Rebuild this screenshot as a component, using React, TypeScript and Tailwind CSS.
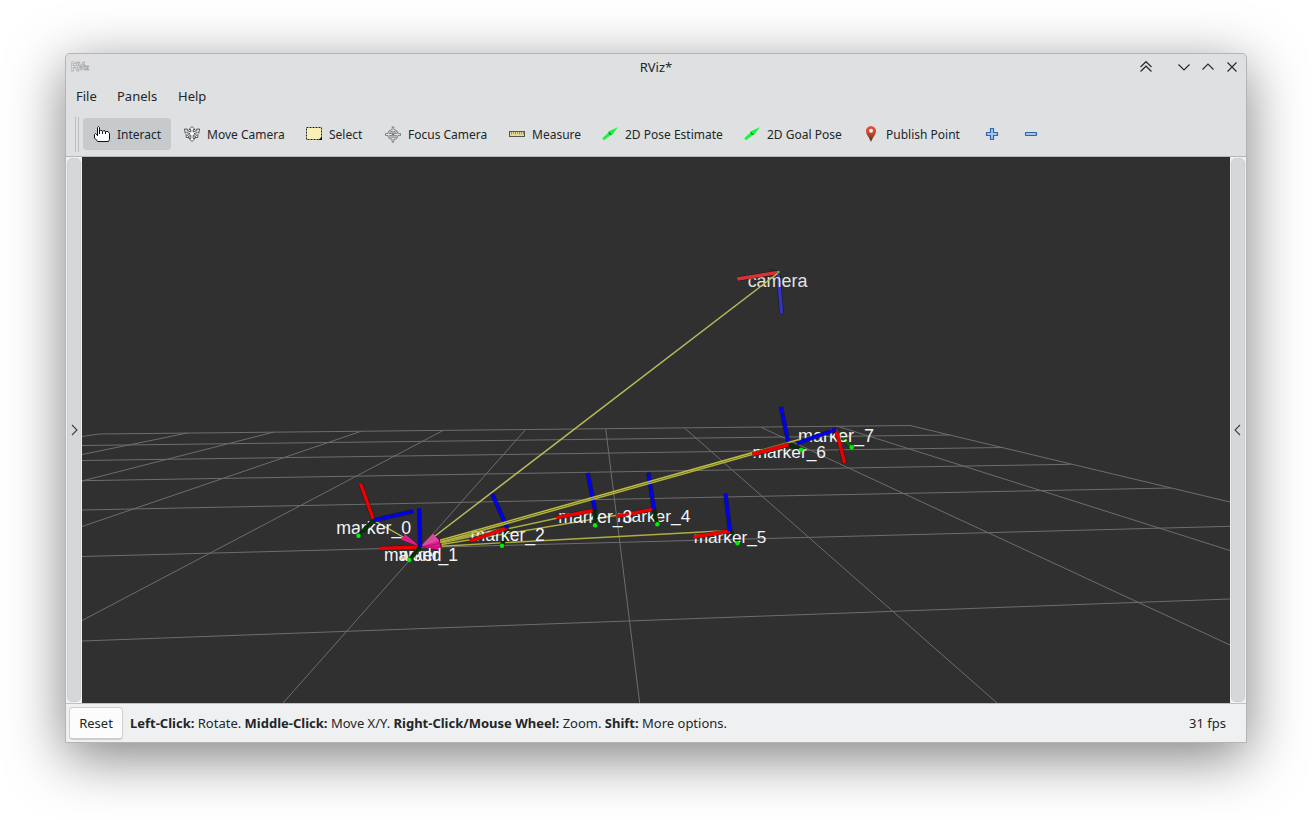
import type { ReactNode } from "react";

type Pt = [number, number];

const GRID: [number, number, number, number][] = [
  [99, 434, 910, 425.5],
  [82, 445.5, 950, 435],
  [82, 460.5, 1003, 447.5],
  [82, 480.7, 1071, 464.3],
  [82, 510, 1171, 488],
  [82, 556.5, 1230, 526.3],
  [82, 641, 1230, 599],
  [99, 434, 82, 436.5],
  [187.5, 433, 82, 454.5],
  [274, 432, 82, 481],
  [361, 431.3, 82, 526.5],
  [443, 430.5, 82, 620.5],
  [525.5, 429.7, 283, 703],
  [605.7, 428.5, 639.7, 703],
  [684.5, 428, 997, 703],
  [761, 427.3, 1230, 645],
  [837, 426, 1230, 550.5],
  [910, 425.5, 1230, 502],
];

interface Frame {
  name: string;
  o: Pt;
  x: Pt;
  y: Pt;
  z: Pt;
  label: Pt;
  size: number;
  labelOverGreen?: boolean;
}

const FRAMES: Frame[] = [
  { name: "marker_7", o: [836, 429.5], x: [844.7, 463], y: [851.7, 447.3], z: [797, 443.3], label: [836, 442], size: 18, labelOverGreen: true },
  { name: "marker_6", o: [788.7, 444.5], x: [752.5, 454.5], y: [801, 449.7], z: [781, 407], label: [789.3, 457.5], size: 17.4, labelOverGreen: true },
  { name: "marker_5", o: [730, 531], x: [693, 537], y: [737.5, 543.3], z: [725.5, 493.7], label: [730, 543.3], size: 17.2, labelOverGreen: true },
  { name: "marker_4", o: [654, 509], x: [616.5, 516.3], y: [657.3, 524.3], z: [648.3, 472.7], label: [653.7, 521.8], size: 17.4 },
  { name: "marker_3", o: [595, 510], x: [556.5, 517.7], y: [595, 525.3], z: [587.7, 473], label: [595.3, 523], size: 17.5 },
  { name: "marker_2", o: [507.3, 528], x: [470, 541], y: [502, 545.7], z: [492, 493.5], label: [507.7, 541], size: 17.6, labelOverGreen: true },
  { name: "marker_1", o: [420.3, 547], x: [379.3, 548.5], y: [409.3, 560], z: [419.2, 508.5], label: [421, 561], size: 17.5 },
  { name: "marker_0", o: [373.7, 520.3], x: [360.5, 483.5], y: [358.5, 535.7], z: [413.3, 511.3], label: [373.7, 533.5], size: 17.8 },
];

const LINKS: Pt[] = [
  [507.3, 527.5],
  [595, 510],
  [654, 509],
  [730, 530.5],
];

function Axis({ from, to, color }: { from: Pt; to: Pt; color: string }) {
  return (
    <g>
      <line x1={from[0]} y1={from[1]} x2={to[0]} y2={to[1]} stroke="#120c18" strokeOpacity="0.6" strokeWidth="4.600" />
      <line x1={from[0]} y1={from[1]} x2={to[0]} y2={to[1]} stroke={color} strokeWidth="3.400" />
    </g>
  );
}

function FrameMark({ f }: { f: Frame }) {
  const green = <Axis from={f.o} to={f.y} color={f.name === "marker_7" ? "#006c00" : "#003200"} />;
  return (
    <g>
      {f.labelOverGreen && green}
      <text x={f.label[0]} y={f.label[1]} fontSize={f.size}>
        {f.name}
      </text>
      {f.name === "marker_1" && (
        <text x="420.500" y="561" fontSize="17.500">
          world
        </text>
      )}
      <Axis from={f.o} to={f.x} color="#ee0000" />
      <Axis from={f.o} to={f.z} color="#0000ee" />
      {!f.labelOverGreen && green}
      <circle cx={f.y[0]} cy={f.y[1]} r="2.200" fill="#00f000" />
    </g>
  );
}

function Scene() {
  return (
    <svg width="1148" height="546" viewBox="82 157 1148 546" className="block">
      <g stroke="#6d6d6d" strokeWidth="1">
        {GRID.map((l, i) => (
          <line key={i} x1={l[0]} y1={l[1]} x2={l[2]} y2={l[3]} />
        ))}
      </g>
      <g stroke="#aeae3c" strokeWidth="1.400">
        {LINKS.map((p, i) => (
          <line key={i} x1={p[0]} y1={p[1]} x2="440" y2={542 + i * 1.4} />
        ))}
        <line x1="373.700" y1="520.300" x2="404" y2="537.500" stroke="#b9b960" />
      </g>
      <polygon points="441,538 442,550 420,547" fill="#7c0b4c" />
      <polygon points="438,537 441,549.5 420,547.3" fill="#ea1591" />
      <path d="M421 547L440 543.500M421 547L441 547" stroke="#a31068" strokeWidth="0.8" />
      <polygon points="433,533.5 439.5,540.5 420,547" fill="#d84b9c" />
      <path d="M434 533L440 541" stroke="#3a0a28" strokeWidth="1" />
      <polygon points="405,534 401,539.5 420,546.8" fill="#e8198f" />
      <g fontFamily="'Liberation Sans', Arial, sans-serif" fill="#f4f4f4" textAnchor="middle">
        {FRAMES.map((f) => (
          <FrameMark key={f.name} f={f} />
        ))}
        <Axis from={[778, 273]} to={[781.7, 313.5]} color="#3333c0" />
        <text x="777.500" y="286.500" fontSize="17.900" fill="#e2e2e2">
          camera
        </text>
      </g>
      <g stroke="#bcbc3c" strokeWidth="1.500">
        <line x1="800" y1="439.300" x2="440" y2="540.300" />
        <line x1="788" y1="444.500" x2="440" y2="542.300" stroke="#b2b23c" />
      </g>
      <Axis from={[788.7, 444.5]} to={[752.5, 454.5]} color="#ee0000" />
      <Axis from={[778, 273]} to={[769, 271.5]} color="#243a24" />
      <Axis from={[778, 272.5]} to={[737.3, 279]} color="#d93232" />
      <circle cx="778.500" cy="272" r="1.200" fill="#40c840" />
      <line x1="777.500" y1="273.500" x2="435" y2="536" stroke="#b9b95c" strokeWidth="1.500" />
    </svg>
  );
}

function HandIcon() {
  return (
    <svg width="16" height="16" viewBox="0 0 16 16" fill="#fff" stroke="#111" strokeWidth="1">
      <path d="M3.500 10V1.500L4.500 .5L5.500 1.500V5.500L6.500 4.500H8L8.500 5.500L9.500 4.800H11L11.500 6L12.500 5.500H14L15.500 7.500V13.500L14.500 15.500H3.500L2.500 14L.5 12V8.500L1.500 7.500L3.500 9.500" />
      <path d="M5.500 5V8M8.500 5.500V8M11.500 6V8" fill="none" />
    </svg>
  );
}

function MoveIcon() {
  return (
    <svg width="16" height="16" viewBox="0 0 16 16" fill="#f8f8f8" stroke="#4a4a4a" strokeWidth="0.9" strokeLinejoin="round">
      <path d="M8 .5L11 3.500H9.200V6L13 4.500L12.500 3.200L15.600 3L14.800 7.200L13.700 6.200L10 7.800L12.800 9.500L13.800 8.500V11.500H10.800L11.800 10.700L9.200 9.200V12.500H11L8 15.500L5 12.500H6.800V9.200L4.200 10.700L5.200 11.500H2.200V8.500L3.200 9.500L6 7.800L2.300 6.200L1.200 7.200L.4 3L3.500 3.200L3 4.500L6.800 6V3.500H5Z" />
    </svg>
  );
}

function SelectIcon() {
  return (
    <svg width="16" height="16" viewBox="0 0 16 16">
      <rect x=".5" y="1.500" width="15" height="12" fill="#f9f0b5" stroke="#222" strokeDasharray="2 1" />
      <path d="M16 10.500V14H12.500Z" fill="#000" />
    </svg>
  );
}

function FocusIcon() {
  return (
    <svg width="17" height="17" viewBox="0 0 17 17" fill="none">
      <circle cx="8.500" cy="8.500" r="4.600" stroke="#777" strokeWidth="2.600" />
      <path d="M8.500 0V17M0 8.500H17" stroke="#777" strokeWidth="2.600" />
      <path d="M8.500 1V16M1 8.500H16" stroke="#e8e8e8" strokeWidth="1" />
      <circle cx="8.500" cy="8.500" r="4.600" stroke="#e8e8e8" strokeWidth="1" />
      <circle cx="8.500" cy="8.500" r="1.200" fill="#777" />
    </svg>
  );
}

function MeasureIcon() {
  return (
    <svg width="16" height="16" viewBox="0 0 16 16">
      <rect x=".5" y="5.500" width="15" height="5" fill="#e8d99b" stroke="#555" />
      <path d="M2.500 6V8.500M4.500 6V8M6.500 6V8.500M8.500 6V8M10.500 6V8.500M12.500 6V8M14.500 6V8.500" stroke="#8a7f58" strokeWidth=".8" />
    </svg>
  );
}

function ArrowIcon() {
  return (
    <svg width="16" height="16" viewBox="0 0 16 16">
      <path d="M.3 12.200L6.800 6.300L6.300 5.600L15.800 1.200L9.800 9.300L9.300 8.700L1.800 14.200Z" fill="#0ff83a" />
      <path d="M6.800 6.300L9.300 8.700L7.800 8.200Z" fill="#074c12" stroke="#074c12" strokeWidth=".4" />
    </svg>
  );
}

function PinIcon() {
  return (
    <svg width="16" height="16" viewBox="0 0 16 16">
      <defs>
        <linearGradient id="pin" x1="0" y1="0" x2="0" y2="1">
          <stop offset="0" stopColor="#e8503c" />
          <stop offset=".4" stopColor="#cf4a30" />
          <stop offset="1" stopColor="#43301a" />
        </linearGradient>
      </defs>
      <path d="M8 0A5 5 0 0 1 13 5.200C13 8.800 9.500 11.500 8 16C6.500 11.500 3 8.800 3 5.200A5 5 0 0 1 8 0Z" fill="url(#pin)" />
      <circle cx="8" cy="4.700" r="2" fill="#eef2f4" />
    </svg>
  );
}

function PlusIcon() {
  return (
    <svg width="16" height="16" viewBox="0 0 16 16">
      <path d="M6.500 2.500H9.500V6.500H13.500V9.500H9.500V13.500H6.500V9.500H2.500V6.500H6.500Z" fill="#a3c5ea" stroke="#2f66ab" strokeWidth="1.200" strokeLinejoin="round" />
    </svg>
  );
}

function MinusIcon() {
  return (
    <svg width="16" height="16" viewBox="0 0 16 16">
      <rect x="2.500" y="6.500" width="11" height="3" rx=".5" fill="#a3c5ea" stroke="#2f66ab" strokeWidth="1.200" />
    </svg>
  );
}

function Tool({ icon, label, cell }: { icon: ReactNode; label?: string; cell: string }) {
  return (
    <div className={`flex h-8 shrink-0 items-center gap-[7px] pl-[11px] text-[12px] ${cell}`}>
      <span className="flex w-4 shrink-0 justify-center">{icon}</span>
      {label && <span className="whitespace-nowrap pt-[2px]">{label}</span>}
    </div>
  );
}

function WinIcon({ d }: { d: string }) {
  return (
    <svg width="16" height="16" viewBox="0 0 16 16" fill="none" stroke="#2a2e32" strokeWidth="1.200">
      <path d={d} />
    </svg>
  );
}

function SideHandle({ d }: { d: string }) {
  return (
    <div className="flex h-[546px] w-4 shrink-0 bg-[#eff0f1] py-px pl-px">
      <div className="flex w-[14px] items-center justify-center rounded-[5px] border border-[#cdcfd1] bg-[#d5d7d9]">
        <svg width="10" height="12" viewBox="0 0 10 12" fill="none" stroke="#3b3e41" strokeWidth="1.100" className="shrink-0">
          <path d={d} />
        </svg>
      </div>
    </div>
  );
}

export default function App() {
  return (
    <div className="h-[820px] w-[1312px] overflow-hidden bg-white pl-[65px] pt-[53px] font-['Noto_Sans',sans-serif] text-[13px] leading-[18px] text-[#232629]">
      <div className="flex h-[690px] w-[1182px] flex-col overflow-hidden rounded-t-[5px] border border-[#b3b5b7] bg-[#dee0e2] shadow-[0_14px_56px_rgba(0,0,0,0.5)]">
        <div className="flex h-[26px] shrink-0 items-center pl-[5px]">
          <div className="flex w-[100px]">
            <svg width="20" height="16" viewBox="0 0 20 16">
              <g fontFamily="'Liberation Sans', sans-serif" fontWeight="bold" fill="#f0f0f0" stroke="#949494" strokeWidth=".6">
                <text x="0" y="12" fontSize="12" textLength="8" lengthAdjust="spacingAndGlyphs">R</text>
                <text x="6.500" y="11" fontSize="10" textLength="7" lengthAdjust="spacingAndGlyphs">V</text>
                <text x="12.500" y="10.500" fontSize="8" textLength="5.500" lengthAdjust="spacingAndGlyphs">iz</text>
              </g>
            </svg>
          </div>
          <div className="flex-1 pl-[3px] text-center">RViz*</div>
          <div className="flex w-[108px] items-center gap-[8px]">
            <span className="mr-[14px] flex">
              <WinIcon d="M2.500 8L8 2.700L13.500 8M2.500 12.500L8 7.200L13.500 12.500" />
            </span>
            <WinIcon d="M2.500 5.500L8 11L13.500 5.500" />
            <WinIcon d="M2.500 10.500L8 5L13.500 10.500" />
            <WinIcon d="M3.500 3.500L12.500 12.500M12.500 3.500L3.500 12.500" />
          </div>
        </div>
        <div className="flex h-[33px] shrink-0 items-center pb-[2px] pl-[10px]">
          <span className="w-[41px]">File</span>
          <span className="w-[61px]">Panels</span>
          <span>Help</span>
        </div>
        <div className="flex h-[44px] shrink-0 items-center border-b border-[#b5b7b9] pb-px pl-[9px]">
          <div className="mr-1 h-[35px] w-1 border-x border-[#bcbec0]" />
          <div className="flex w-[90px] shrink-0">
            <div className="w-[88px] rounded-[4px] bg-[#c6cacd]">
              <Tool icon={<HandIcon />} label="Interact" cell="w-[88px]" />
            </div>
          </div>
          <Tool icon={<MoveIcon />} label="Move Camera" cell="w-[122px]" />
          <Tool icon={<SelectIcon />} label="Select" cell="w-[79px]" />
          <Tool icon={<FocusIcon />} label="Focus Camera" cell="w-[124px]" />
          <Tool icon={<MeasureIcon />} label="Measure" cell="w-[93px]" />
          <Tool icon={<ArrowIcon />} label="2D Pose Estimate" cell="w-[142px]" />
          <Tool icon={<ArrowIcon />} label="2D Goal Pose" cell="w-[119px]" />
          <Tool icon={<PinIcon />} label="Publish Point" cell="w-[121px]" />
          <Tool icon={<PlusIcon />} cell="w-[39px]" />
          <Tool icon={<MinusIcon />} cell="w-[39px]" />
        </div>
        <div className="flex h-[546px] shrink-0">
          <SideHandle d="M3 1L8 6L3 11" />
          <div className="w-[1148px] shrink-0 bg-[#303030]">
            <Scene />
          </div>
          <SideHandle d="M7 1L2 6L7 11" />
        </div>
        <div className="flex min-h-0 flex-1 items-center border-t border-[#bfc1c3] bg-[#eff0f1] pl-[3px] pr-5">
          <button className="mr-[7px] h-[33px] w-[54px] rounded-[4px] border border-b-2 border-[#cccecf] bg-[#fcfcfc]">Reset</button>
          <div className="flex-1 whitespace-nowrap">
            <b>Left-Click:</b> Rotate. <b>Middle-Click:</b> Move X/Y. <b>Right-Click/Mouse Wheel:</b> Zoom. <b>Shift:</b> More options.
          </div>
          <div>31 fps</div>
        </div>
      </div>
    </div>
  );
}
